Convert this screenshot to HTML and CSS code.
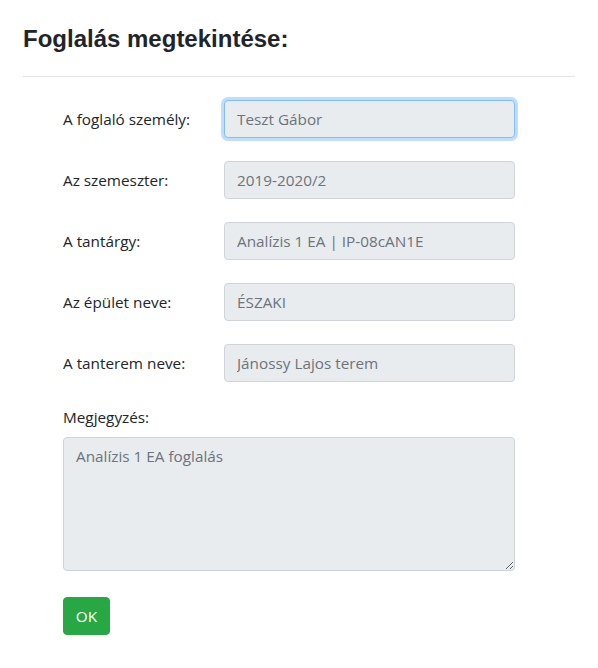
FILE: index.html
```html
<!DOCTYPE html>
<html lang="hu">
<head>
<meta charset="utf-8">
<title>Foglalás megtekintése</title>
<link rel="stylesheet" href="styles.css">
</head>
<body>
<div class="modal">
  <h2 class="title">Foglalás megtekintése:</h2>
  <hr class="divider">
  <form class="form">
    <div class="row">
      <label class="label">A foglaló személy:</label>
      <div class="field"><input class="control focused" type="text" value="Teszt Gábor" readonly></div>
    </div>
    <div class="row">
      <label class="label">Az szemeszter:</label>
      <div class="field"><input class="control" type="text" value="2019-2020/2" readonly></div>
    </div>
    <div class="row">
      <label class="label">A tantárgy:</label>
      <div class="field"><input class="control" type="text" value="Analízis 1 EA | IP-08cAN1E" readonly></div>
    </div>
    <div class="row">
      <label class="label">Az épület neve:</label>
      <div class="field"><input class="control" type="text" value="ÉSZAKI" readonly></div>
    </div>
    <div class="row">
      <label class="label">A tanterem neve:</label>
      <div class="field"><input class="control" type="text" value="Jánossy Lajos terem" readonly></div>
    </div>
    <div class="note">
      <label class="note-label">Megjegyzés:</label>
      <textarea class="control area" rows="5" readonly>Analízis 1 EA foglalás</textarea>
    </div>
    <button class="btn" type="button">OK</button>
  </form>
</div>
</body>
</html>
```

FILE: styles.css
```css
* { box-sizing: border-box; }
html, body { margin: 0; padding: 0; background: #fff; }
body {
  font-family: "Open Sans", "Noto Sans", sans-serif;
  font-size: 15.3px;
  color: #212529;
}
.modal {
  padding: 0 23px;
  width: 598px;
}
.title {
  margin: 25px 0 0 0;
  font-family: "Liberation Sans", Arial, sans-serif;
  font-weight: bold;
  font-size: 24px;
  line-height: 28.8px;
  color: #212529;
}
.divider {
  margin: 22px 0 0 0;
  border: 0;
  border-top: 1px solid #e5e5e5;
  height: 0;
}
.form {
  padding: 23px 60px 0 40px;
}
.row {
  display: grid;
  grid-template-columns: 161px 291px;
  align-items: center;
  margin-bottom: 23px;
}
.label {
  line-height: 24px;
}
.control {
  display: block;
  width: 100%;
  height: 38px;
  padding: 6px 12px;
  font-family: inherit;
  font-size: 15.3px;
  line-height: 24px;
  color: #6c737a;
  background: #e9ecef;
  border: 1px solid #ced4da;
  border-radius: 4px;
  outline: none;
}
.focused {
  border-color: #80bdff;
  box-shadow: 0 0 0 3px rgba(0, 123, 255, 0.25);
}
.note-label {
  display: block;
  line-height: 24px;
  margin-bottom: 8px;
}
.area {
  height: 134px;
  resize: vertical;
  width: 452px;
}
.btn {
  margin-top: 26px;
  display: block;
  width: 47px;
  height: 38px;
  padding: 0;
  font-family: inherit;
  font-size: 15.3px;
  color: #fff;
  background: #28a745;
  border: 1px solid #28a745;
  border-radius: 4px;
}
```
